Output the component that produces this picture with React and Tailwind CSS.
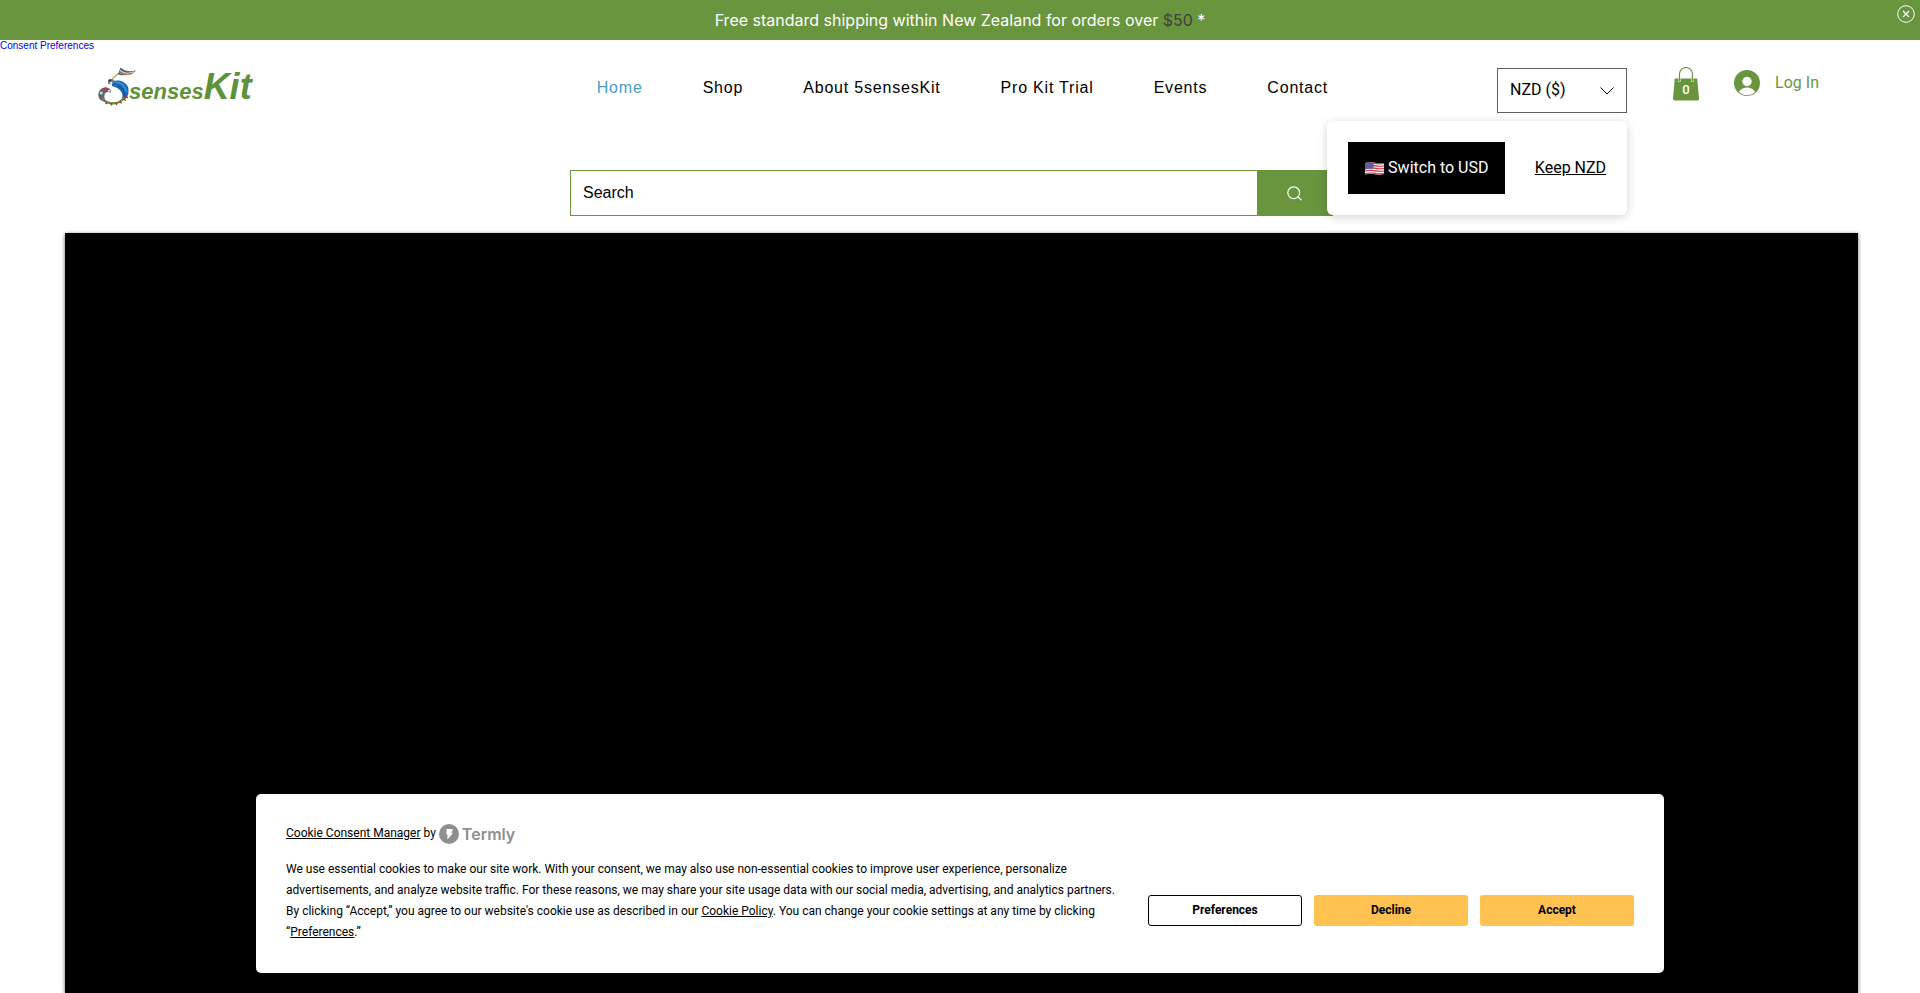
const navItems = ["Home", "Shop", "About 5sensesKit", "Pro Kit Trial", "Events", "Contact"];

function BirdMark() {
  return (
    <svg viewBox="0 0 31 39" className="h-[39px] w-[31px] overflow-visible" aria-hidden="true">
      <path d="M14 14.500 C19 12.500 27 13.500 30 20 C31.500 25 30 30 26.500 33 L24 32 C26 26 22 21 14 19 Z" fill="#1b66b3" />
      <path d="M17 15.500 C22 14.500 27 18 28.500 25" fill="none" stroke="#2b8fd8" strokeWidth="2.200" />
      <path d="M21 19 C25 21.500 27 25 26 30" fill="none" stroke="#17457f" strokeWidth="1" />
      <path d="M26.500 30 C24 34 19 36.800 13.500 36.300 C8 35.800 4.500 33 2.500 29" fill="none" stroke="#6c8a3c" strokeWidth="2.200" />
      <path d="M27.500 29 l2.500 2 M25.500 31.500 l2 2.200 M22 34 l1.500 2.500 M18 35.500 l.7 2.500 M13.500 36 v2.500 M9 35 l-1.300 2" stroke="#a3342b" strokeWidth="1.400" />
      <path d="M1 31 C-1 26 2 20.500 7.500 20.500 C12 20.500 13.500 23 12.500 26 C10 23.800 7 25.500 6.500 28 C6 30.500 6.500 32.500 8 34 C4.500 34.500 2 33.500 1 31 Z" fill="#56637a" />
      <ellipse cx="7.500" cy="22" rx="2.800" ry="1.600" fill="#c9372f" />
      <circle cx="3.300" cy="26" r="1.500" fill="#d8dde2" />
      <circle cx="4" cy="29" r="1.400" fill="#b64a3f" />
      <circle cx="11" cy="23.800" r="1.100" fill="#dfe6ea" />
      <circle cx="5.200" cy="32" r="1.200" fill="#4b9b55" />
      <path d="M10 13 L14.500 11.500 L17 15 L13 17.500 L10 17 Z" fill="#717b87" />
      <circle cx="12" cy="13.500" r="1.300" fill="#30343c" />
      <circle cx="13" cy="16" r="1.300" fill="#e3e7ea" />
      <path d="M14.500 11.500 L22 5" stroke="#b7a25a" strokeWidth="1.200" />
      <path d="M22.500 .500 C25 3 30 5.500 38 3.500 C34.500 8 28 9.500 20 7.500 Z" fill="#48648c" />
      <path d="M22 3.500 C26 6.500 31 7 36 4.800" fill="none" stroke="#e0d6bd" strokeWidth="1.100" />
      <path d="M21.500 5.500 C26 8 30 8.200 34.500 6.500" fill="none" stroke="#d9884a" strokeWidth="1.200" />
    </svg>
  );
}

function Logo() {
  return (
    <a href="#" aria-label="5sensesKit" className="flex h-[39px] items-start text-[#5d923a]">
      <BirdMark />
      <span className="flex items-baseline font-['Liberation_Sans',sans-serif] leading-10 font-bold italic">
        <span className="text-[22px] leading-10">senses</span>
        <span className="text-[36px] leading-10">Kit</span>
      </span>
    </a>
  );
}

function CartIcon() {
  return (
    <svg viewBox="0 0 26 34" className="h-[34px] w-[26px]" aria-hidden="true">
      <path d="M2.600 11.500 H23.400 Q24.200 11.500 24.300 12.300 L26 31.500 Q26 33.500 24.200 33.500 H1.800 Q0 33.500 0 31.500 L1.700 12.300 Q1.800 11.500 2.600 11.500 Z" fill="#68953e" />
      <path d="M6.500 11.500 V15 M19.500 11.500 V15" stroke="#fff" strokeWidth="2" />
      <path d="M6.500 14.500 V7 A6.500 6.500 0 0 1 19.500 7 V14.500" fill="none" stroke="#68953e" strokeWidth="1.200" />
      <text x="13" y="27" textAnchor="middle" fontSize="13" fontWeight="500" fontFamily="Roboto, sans-serif" fill="#fff">0</text>
    </svg>
  );
}

function AvatarIcon() {
  return (
    <svg viewBox="0 0 26 26" className="size-[26px]" aria-hidden="true">
      <circle cx="13" cy="13" r="13" fill="#68953e" />
      <circle cx="13" cy="11.500" r="4.700" fill="#fff" />
      <path d="M4.800 22 C7 18.500 10 17.500 13 17.500 S19 18.500 21.200 22 C18.500 24.300 16 25.200 13 25.200 S7.500 24.300 4.800 22 Z" fill="#fff" />
    </svg>
  );
}

function UsFlag() {
  return (
    <svg viewBox="0 0 19 13" className="h-[13px] w-[19px]" aria-hidden="true">
      <path d="M0 1 Q5 -.5 9.500 .7 T19 1 V12 Q14 13.300 9.500 12.300 T0 12.500 Z" fill="#f1eef0" />
      <path d="M0 1.500 Q5 .3 9.500 1.200 T19 1.500 M0 4 Q5 2.800 9.500 3.700 T19 4 M0 6.500 Q5 5.300 9.500 6.200 T19 6.500 M0 9 Q5 7.800 9.500 8.700 T19 9 M0 11.700 Q5 10.500 9.500 11.400 T19 11.700" fill="none" stroke="#c8384a" strokeWidth="1.200" />
      <path d="M0 1 Q4 -.3 8.500 .5 V7 Q4 6.300 0 7.500 Z" fill="#5a619f" />
    </svg>
  );
}

function CurrencyPicker() {
  return (
    <div className="relative w-[130px] font-[Roboto,sans-serif]">
      <select
        aria-label="Currency"
        className="h-[45px] w-full appearance-none border border-[#5f5f63] bg-white pb-0.5 pl-3 text-base text-black"
      >
        <option>NZD ($)</option>
      </select>
      <svg viewBox="0 0 14 8" className="pointer-events-none absolute top-[19px] right-[13px] h-2 w-3.5" aria-hidden="true">
        <path d="M.5 .5 L7 7 L13.500 .5" fill="none" stroke="#000" strokeWidth="1" />
      </svg>
      <div className="absolute top-full right-0 z-10 mt-2 flex w-[300px] items-center justify-between rounded-md bg-white p-[21px] text-base shadow-[0_2px_10px_rgba(0,0,0,0.18)]">
        <button type="button" className="flex h-[52px] items-center gap-1 bg-black px-[17px] text-white">
          <UsFlag />
          Switch to USD
        </button>
        <button type="button" className="text-black underline">Keep NZD</button>
      </div>
    </div>
  );
}

function CookieDialog() {
  return (
    <div className="fixed inset-x-0 bottom-5 flex justify-center px-5">
      <section aria-label="Cookie consent" className="flex w-full max-w-[1408px] items-end gap-[30px] rounded-[5px] bg-white p-[30px] font-[Roboto,sans-serif] text-xs text-black">
        <div className="flex flex-1 flex-col gap-[15px]">
          <div className="flex h-5 items-center gap-[3px]">
            <span className="pb-0.5"><a href="#" className="underline">Cookie Consent Manager</a> by</span>
            <span className="flex items-center gap-[3px] text-[#8f8f8f]">
              <svg viewBox="0 0 20 20" className="size-5" aria-hidden="true">
                <circle cx="10" cy="10" r="10" fill="#8f8f8f" />
                <path d="M7.500 5 H14 L12.500 9 H14 L8.500 15.500 V10.500 H7.500 Z" fill="#fff" />
              </svg>
              <span className="font-[Inter,sans-serif] text-base leading-5 font-semibold">Termly</span>
            </span>
          </div>
          <p className="leading-[21px]">
            We use essential cookies to make our site work. With your consent, we may also use non-essential cookies to improve user experience, personalize advertisements, and analyze website traffic. For these reasons, we may share your site usage data with our social media, advertising, and analytics partners. By clicking “Accept,” you agree to our website's cookie use as described in our <a href="#" className="underline">Cookie Policy</a>. You can change your cookie settings at any time by clicking “<a href="#" className="underline">Preferences</a>.”
          </p>
        </div>
        <div className="mb-[17px] flex gap-3 font-bold">
          <button type="button" className="h-[31px] w-[154px] rounded-[3px] border border-black bg-white pb-0.5">Preferences</button>
          <button type="button" className="h-[31px] w-[154px] rounded-[3px] bg-[#ffc150] pb-0.5">Decline</button>
          <button type="button" className="h-[31px] w-[154px] rounded-[3px] bg-[#ffc150] pb-0.5">Accept</button>
        </div>
      </section>
    </div>
  );
}

export default function App() {
  return (
    <div className="flex min-h-screen flex-col bg-white font-['Liberation_Sans',sans-serif]">
      <div className="relative flex h-10 items-center justify-center bg-[#68953e]">
        <p className="font-[Inter,sans-serif] text-base text-white">
          Free standard shipping within New Zealand for orders over <span className="text-[#414141]">$50</span> *
        </p>
        <button type="button" aria-label="Close" className="absolute top-[5px] right-[5px]">
          <svg viewBox="0 0 18 18" className="size-[18px]" fill="none" stroke="#fff" aria-hidden="true">
            <circle cx="9" cy="9" r="8.300" strokeWidth="1" />
            <path d="M6 6 L12 12 M12 6 L6 12" strokeWidth="1.200" />
          </svg>
        </button>
      </div>

      <header>
        <a href="#" className="block w-fit text-[10px] leading-3 text-[#0000ee]">Consent Preferences</a>
        <div className="flex items-start pt-[15px] pr-[101px] pl-[98px]">
          <Logo />
          <nav className="mt-[9px] mr-[169px] ml-auto flex gap-[60px] text-base tracking-wider text-black">
            {navItems.map((item) => (
              <a key={item} href="#" className={item === "Home" ? "text-[#4a9ccd]" : "text-black"}>{item}</a>
            ))}
          </nav>
          <div className="flex items-start">
            <div className="mt-px"><CurrencyPicker /></div>
            <button type="button" aria-label="Cart with 0 items" className="ml-[46px]"><CartIcon /></button>
            <button type="button" className="mt-[3px] ml-[35px] flex items-center gap-[15px] font-[Roboto,sans-serif] text-base text-[#68953e]">
              <AvatarIcon />
              Log In
            </button>
          </div>
        </div>
        <div className="flex justify-center pt-[57px] pr-[17px] pb-[17px]">
          <form role="search" className="flex h-[46px] w-full max-w-[763px] border border-[#68953e]">
            <input type="search" aria-label="Search" placeholder="Search" className="min-w-0 flex-1 px-3 text-base text-black placeholder:text-black" />
            <button type="button" aria-label="Submit search" className="flex w-[75px] items-center justify-center bg-[#68953e]">
              <svg viewBox="0 0 15 15" className="size-[15px]" fill="none" stroke="#fff" strokeWidth="1.200" aria-hidden="true">
                <circle cx="6.700" cy="6.700" r="5.900" />
                <path d="M11 11 L14.500 14.300" />
              </svg>
            </button>
          </form>
        </div>
      </header>

      <main className="mr-[62px] ml-[65px] flex-1 bg-black shadow-[0_1px_4px_rgba(0,0,0,0.6)]" />
      <CookieDialog />
    </div>
  );
}
